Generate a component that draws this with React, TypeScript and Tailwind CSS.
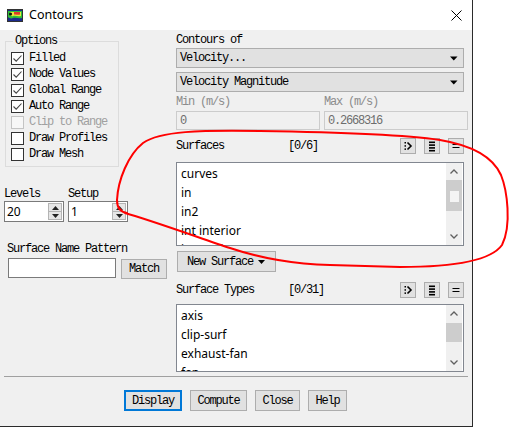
import React from 'react';

const mono = "font-['Liberation_Mono',monospace] text-[12px] leading-[12px] tracking-[-1.2px]";
const sans = "font-['Noto_Sans',sans-serif]";

function Check({ label, checked, disabled }: { label: string; checked?: boolean; disabled?: boolean }) {
  return (
    <div className="flex h-[16px] items-center">
      <span
        className={`flex h-[13px] w-[13px] items-center justify-center border ${
          disabled ? 'border-[#c4c4c4] bg-[#f7f7f7]' : 'border-[#333333] bg-white'
        }`}
      >
        {checked && (
          <svg width="11" height="11" viewBox="0 0 11 11">
            <path d="M1.5 5.5 L4.2 8.2 L9.5 2.5" fill="none" stroke="#444" strokeWidth="1.1" />
          </svg>
        )}
      </span>
      <span className={`ml-[5px] ${mono} ${disabled ? 'text-[#a0a0a0]' : 'text-black'}`}>{label}</span>
    </div>
  );
}

function Dropdown({ value }: { value: string }) {
  return (
    <div className="flex h-[20px] w-[288px] items-center justify-between border border-[#adadad] bg-[#e1e1e1] pl-[3px] pr-[5px]">
      <span className={`${mono} text-black`}>{value}</span>
      <svg width="8" height="5" viewBox="0 0 8 5">
        <path d="M0 0.5 H7.5 L3.75 4.5 Z" fill="#000" />
      </svg>
    </div>
  );
}

function Spinner({ value }: { value: string }) {
  return (
    <div className="flex h-[21px] w-[60px] items-center border border-[#7a7a7a] bg-white">
      <span className={`flex-1 pl-[2px] text-[12px] leading-[14px] text-black ${sans}`}>{value}</span>
      <div className="mr-[1px] flex h-[17px] w-[14px] flex-col">
        <div className="flex h-[9px] items-center justify-center border border-[#b4b4b4] bg-[#e6e6e6]">
          <svg width="7" height="4" viewBox="0 0 7 4">
            <path d="M0 4 H7 L3.5 0 Z" fill="#222" />
          </svg>
        </div>
        <div className="flex h-[8px] items-center justify-center border border-t-0 border-[#b4b4b4] bg-[#e6e6e6]">
          <svg width="7" height="4" viewBox="0 0 7 4">
            <path d="M0 0 H7 L3.5 4 Z" fill="#222" />
          </svg>
        </div>
      </div>
    </div>
  );
}

function ToolBtn({ kind }: { kind: 'all' | 'bars' | 'eq' }) {
  return (
    <div className="flex h-[16px] w-[16px] items-center justify-center border border-[#adadad] bg-[#e1e1e1]">
      <svg width="14" height="14" viewBox="0 0 14 14">
        {kind === 'all' && (
          <>
            <rect x="3.5" y="3" width="1.5" height="1.5" fill="#000" />
            <rect x="3.5" y="6.2" width="1.5" height="1.5" fill="#000" />
            <rect x="3.5" y="9.4" width="1.5" height="1.5" fill="#000" />
            <path d="M6.5 3.5 L10 7 L6.5 10.5" fill="none" stroke="#000" strokeWidth="1.6" />
          </>
        )}
        {kind === 'bars' && (
          <>
            <rect x="4" y="2.5" width="6" height="1.6" fill="#000" />
            <rect x="4" y="5.3" width="6" height="1.6" fill="#000" />
            <rect x="4" y="8.1" width="6" height="1.6" fill="#000" />
            <rect x="4" y="10.9" width="6" height="1.6" fill="#000" />
          </>
        )}
        {kind === 'eq' && (
          <>
            <rect x="3.5" y="5" width="7" height="1" fill="#000" />
            <rect x="3.5" y="8" width="7" height="1" fill="#000" />
          </>
        )}
      </svg>
    </div>
  );
}

function ListHeader({ label, count }: { label: string; count: string }) {
  return (
    <div className="flex h-[16px] items-center">
      <span className={`w-[112px] ${mono} text-black`}>{label}</span>
      <span className={`flex-1 ${mono} text-black`}>{count}</span>
      <div className="flex gap-[8px]">
        <ToolBtn kind="all" />
        <ToolBtn kind="bars" />
        <ToolBtn kind="eq" />
      </div>
    </div>
  );
}

function Chevron({ up }: { up?: boolean }) {
  return (
    <svg width="8" height="5" viewBox="0 0 8 5">
      <path d={up ? 'M0.5 4.5 L4 1 L7.5 4.5' : 'M0.5 0.5 L4 4 L7.5 0.5'} fill="none" stroke="#606060" strokeWidth="1.3" />
    </svg>
  );
}

function ListBox({ items, height, thumb, thumbTop, knob }: { items: string[]; height: string; thumb: string; thumbTop: string; knob?: boolean }) {
  return (
    <div className={`flex w-[288px] overflow-hidden border border-[#828790] bg-white ${height}`}>
      <div className={`flex-1 overflow-hidden pl-[4px] pt-[1px] text-[12px] leading-[19px] text-black ${sans}`}>
        {items.map((it) => (
          <div key={it} className="whitespace-nowrap">
            {it}
          </div>
        ))}
      </div>
      <div className="mr-[1px] flex w-[16px] flex-col bg-[#f0f0f0]">
        <div className="flex h-[17px] items-center justify-center">
          <Chevron up />
        </div>
        <div className={`${thumbTop} flex items-center justify-center bg-[#cdcdcd] ${thumb}`}>
          {knob && <div className="mt-[2px] h-[11px] w-[9px] bg-[#f4f4f4]" />}
        </div>
        <div className="flex-1" />
        <div className="flex h-[17px] items-center justify-center">
          <Chevron />
        </div>
      </div>
    </div>
  );
}

function Btn({ label, w, active }: { label: string; w: string; active?: boolean }) {
  return (
    <div
      className={`flex h-[21px] items-center justify-center bg-[#e1e1e1] ${w} ${
        active ? 'border-2 border-[#0078d7]' : 'border border-[#adadad]'
      }`}
    >
      <span className={`${mono} text-black`}>{label}</span>
    </div>
  );
}

function ContourIcon() {
  return (
    <svg width="16" height="13" viewBox="0 0 16 13">
      <rect x="0.5" y="0.5" width="15" height="12" fill="#1a2a8c" stroke="#333" />
      <path d="M1 2 H15 V9 C12 10 9 8 6 9 C4 10 2 9 1 8 Z" fill="#2fbf3a" />
      <path d="M3 3 H14 V7 C11 8 9 6 6 7 C5 7.5 4 7 3 6 Z" fill="#e8e83a" />
      <path d="M7 3 H13 V5.5 C11 6.5 9 5 7 5.5 Z" fill="#e03a2a" />
      <circle cx="3.5" cy="5" r="1.6" fill="#111" />
      <rect x="1" y="10" width="14" height="2" fill="#1a2a8c" />
    </svg>
  );
}

export default function App() {
  return (
    <div className="relative h-[428px] w-[511px] overflow-hidden bg-white">
      <div className="flex h-[427px] w-[473px] flex-col border-r border-b border-[#2b2b2b] bg-[#f0f0f0]">
        {/* Title bar */}
        <div className="flex h-[30px] shrink-0 items-center bg-white pl-[7px] pr-[10px]">
          <ContourIcon />
          <span className={`ml-[6px] text-[12.5px] text-black ${sans}`}>Contours</span>
          <svg className="ml-auto" width="11" height="11" viewBox="0 0 11 11">
            <path d="M0.5 0.5 L10.5 10.5 M10.5 0.5 L0.5 10.5" stroke="#000" strokeWidth="1" />
          </svg>
        </div>

        {/* Body */}
        <div className="flex h-[342px] shrink-0 pl-[4px]">
          {/* Left column */}
          <div className="flex w-[172px] flex-col">
            <div className="relative mt-[11px] ml-[1px] h-[126px] w-[114px] border border-[#dcdcdc] pt-[8px] pl-[5px]">
              <span className={`absolute -top-[7px] left-[7px] bg-[#f0f0f0] px-[2px] ${mono} text-black`}>Options</span>
              <Check label="Filled" checked />
              <Check label="Node Values" checked />
              <Check label="Global Range" checked />
              <Check label="Auto Range" checked />
              <Check label="Clip to Range" disabled />
              <Check label="Draw Profiles" />
              <Check label="Draw Mesh" />
            </div>

            <div className="mt-[21px] flex gap-[4px]">
              <div className="flex flex-col">
                <span className={`${mono} text-black`}>Levels</span>
                <div className="mt-[1px]">
                  <Spinner value="20" />
                </div>
              </div>
              <div className="flex flex-col">
                <span className={`${mono} text-black`}>Setup</span>
                <div className="mt-[1px]">
                  <Spinner value="1" />
                </div>
              </div>
            </div>

            <span className={`mt-[21px] ml-[3px] ${mono} text-black`}>Surface Name Pattern</span>
            <div className="mt-[3px] ml-[4px] flex items-start">
              <div className="h-[20px] w-[108px] border border-[#7a7a7a] bg-white" />
              <div className="mt-[1px] ml-[5px] flex h-[20px] w-[46px] items-center justify-center border border-[#adadad] bg-[#e1e1e1]">
                <span className={`${mono} text-black`}>Match</span>
              </div>
            </div>
          </div>

          {/* Right column */}
          <div className="flex w-[292px] flex-col">
            <span className={`mt-[4px] ${mono} text-black`}>Contours of</span>
            <div className="mt-[2px]">
              <Dropdown value="Velocity..." />
            </div>
            <div className="mt-[4px]">
              <Dropdown value="Velocity Magnitude" />
            </div>
            <div className="mt-[4px] flex gap-[4px]">
              <div className="flex w-[144px] flex-col">
                <span className={`${mono} text-[#8c8c8c]`}>Min (m/s)</span>
                <div className="mt-[3px] flex h-[19px] items-center border border-[#cccccc] bg-[#f0f0f0] pl-[3px]">
                  <span className={`${mono} text-[#6d6d6d]`}>0</span>
                </div>
              </div>
              <div className="flex w-[144px] flex-col">
                <span className={`${mono} text-[#8c8c8c]`}>Max (m/s)</span>
                <div className="mt-[3px] flex h-[19px] items-center border border-[#cccccc] bg-[#f0f0f0] pl-[3px]">
                  <span className={`${mono} text-[#6d6d6d]`}>0.2668316</span>
                </div>
              </div>
            </div>

            <div className="mt-[8px] w-[288px]">
              <ListHeader label="Surfaces" count="[0/6]" />
            </div>
            <div className="mt-[8px]">
              <ListBox
                items={['curves', 'in', 'in2', 'int interior', 'int_outlet']}
                height="h-[84px]"
                thumb="h-[31px]"
                thumbTop="mt-0"
                knob
              />
            </div>
            <div className="mt-[5px] ml-[1px] flex h-[21px] w-[99px] items-center border border-[#adadad] bg-[#e1e1e1] pl-[9px]">
              <span className={`${mono} text-black`}>New Surface</span>
              <svg className="ml-[5px]" width="7" height="4" viewBox="0 0 7 4">
                <path d="M0 0 H7 L3.5 4 Z" fill="#000" />
              </svg>
            </div>

            <div className="mt-[10px] w-[288px]">
              <ListHeader label="Surface Types" count="[0/31]" />
            </div>
            <div className="mt-[6px]">
              <ListBox
                items={['axis', 'clip-surf', 'exhaust-fan', 'fan']}
                height="h-[68px]"
                thumb="h-[19px]"
                thumbTop="mt-[1px]"
              />
            </div>
          </div>
        </div>

        <div className="mx-[4px] mt-[4px] border-t border-[#a0a0a0]" />

        <div className="mt-[13px] flex gap-[8px] pl-[124px]">
          <Btn label="Display" w="w-[58px]" active />
          <Btn label="Compute" w="w-[57px]" />
          <Btn label="Close" w="w-[45px]" />
          <Btn label="Help" w="w-[39px]" />
        </div>
      </div>

      {/* red hand-drawn annotation */}
      <svg className="pointer-events-none absolute inset-0" width="511" height="428" viewBox="0 0 511 428">
        <path
          d="M125 213 C150 220 200 238 230 248 S290 264 330 265 L400 267 C450 267 490 262 502 245 C512 225 507 190 501 175 C492 155 470 145 440 140 C400 134 330 132 260 131 C200 130 160 131 143 143 C128 155 118 180 117 200 C117 208 120 212 127 213"
          fill="none"
          stroke="#ff0000"
          strokeWidth="2"
          strokeLinecap="round"
        />
      </svg>
    </div>
  );
}
